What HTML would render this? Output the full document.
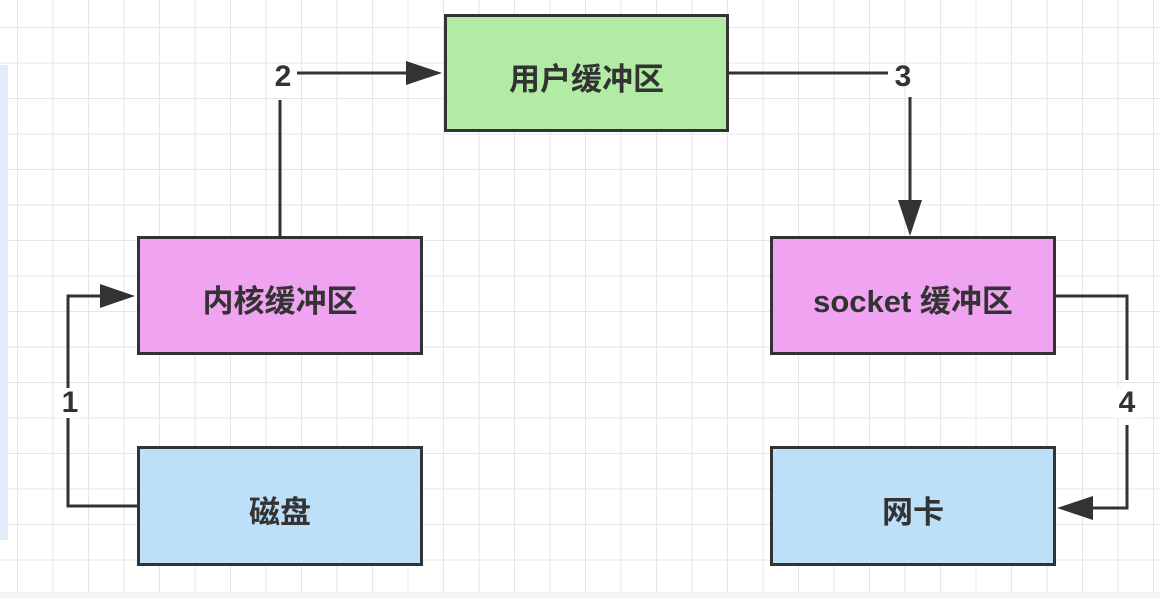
<!DOCTYPE html>
<html><head><meta charset="utf-8"><style>
body{margin:0;width:1160px;height:598px;overflow:hidden;background:#fff;font-family:"Liberation Sans","Noto Sans CJK SC",sans-serif}
#g{position:absolute;left:0;top:0;width:1160px;height:592px;
background-image:linear-gradient(#e6e6e6 1px,transparent 1px),linear-gradient(90deg,#e6e6e6 1px,transparent 1px);
background-size:35.5px 35.5px;background-position:17px 27px}
.b{position:absolute;border:3px solid #333;box-sizing:border-box;display:flex;align-items:center;justify-content:center;font-size:31px;font-weight:bold;color:#333;padding-top:6px}
.l{position:absolute;font-size:30px;font-weight:bold;color:#333;background:#fff;line-height:30px;text-align:center;width:24px}
</style></head><body>
<div id="g"></div>
<div style="position:absolute;left:0;top:65px;width:8px;height:475px;background:#e3ecfb"></div>
<div style="position:absolute;left:0;top:592px;width:1160px;height:6px;background:#f3f3f3"></div>
<svg width="1160" height="598" style="position:absolute;left:0;top:0" fill="none" stroke="#333" stroke-width="3">
<path d="M280 236V100"/><path d="M297 73H420"/><polygon points="442,73 406,61 406,85" fill="#333" stroke="none"/>
<path d="M728 73H888"/><path d="M910 97V212"/><polygon points="910,236 898,200 922,200" fill="#333" stroke="none"/>
<path d="M137 506H68V418"/><path d="M68 388V296H112"/><polygon points="135,296 100,284 100,308" fill="#333" stroke="none"/>
<path d="M1055 296H1127V380"/><path d="M1127 425V508H1080"/><polygon points="1057,508 1093,496 1093,520" fill="#333" stroke="none"/>
</svg>
<div class="b" style="left:444px;top:14px;width:285px;height:118px;background:#b2eba4">用户缓冲区</div>
<div class="b" style="left:137px;top:236px;width:286px;height:119px;background:#f0a3f0">内核缓冲区</div>
<div class="b" style="left:137px;top:446px;width:286px;height:120px;background:#bde0f9">磁盘</div>
<div class="b" style="left:770px;top:236px;width:286px;height:119px;background:#f0a3f0">socket 缓冲区</div>
<div class="b" style="left:770px;top:446px;width:286px;height:120px;background:#bde0f9">网卡</div>
<div class="l" style="left:271px;top:62px;background:none">2</div>
<div class="l" style="left:891px;top:62px;background:none">3</div>
<div class="l" style="left:58px;top:388px">1</div>
<div class="l" style="left:1115px;top:388px">4</div>
</body></html>
